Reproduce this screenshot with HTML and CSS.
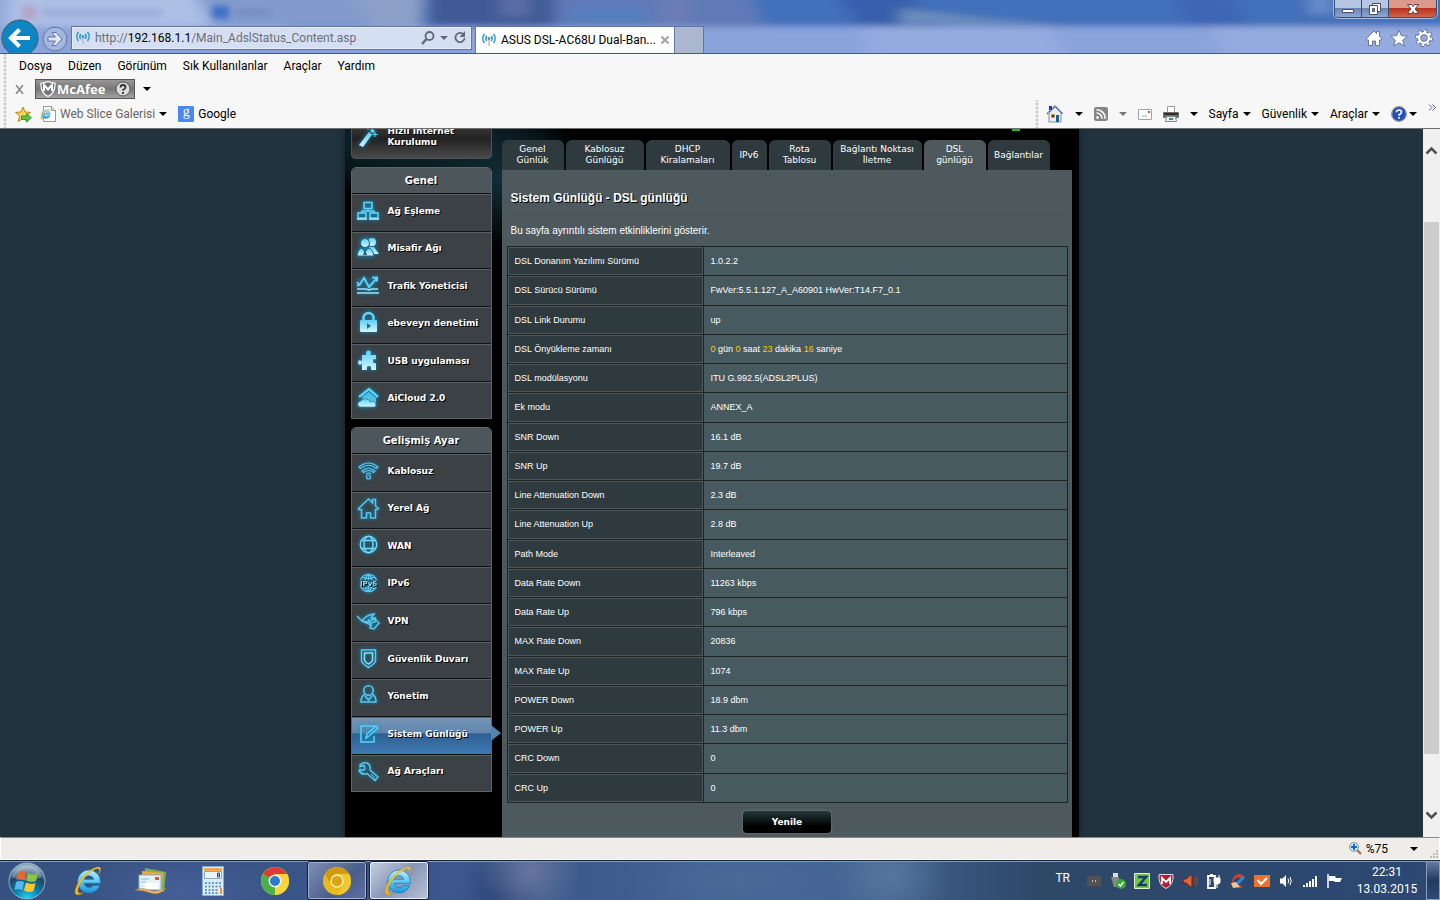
FILE: index.html
```html
<!DOCTYPE html>
<html lang="tr">
<head>
    <meta charset="utf-8">
    <title>ASUS DSL-AC68U Dual-Band</title>
    <link rel="stylesheet" href="styles.css">
</head>
<body>
    <svg class="defs" aria-hidden="true">
        <defs>
            <linearGradient id="ieBlue" x1="0" y1="0" x2="0" y2="1"><stop offset="0" stop-color="#b9efff"/><stop offset=".5" stop-color="#5cc8f4"/><stop offset="1" stop-color="#1f93d8"/></linearGradient>
            <linearGradient id="ieGold" x1="0" y1="1" x2="1" y2="0"><stop offset="0" stop-color="#f2b90f"/><stop offset="1" stop-color="#ffe458"/></linearGradient>
            <radialGradient id="orb" cx=".5" cy="1" r=".9"><stop offset="0" stop-color="#1fd5fb"/><stop offset=".4" stop-color="#0b7fb0"/><stop offset=".75" stop-color="#1d4468"/><stop offset="1" stop-color="#8ea9bd"/></radialGradient>
            <linearGradient id="glow" x1="0" y1="0" x2="0" y2="1"><stop offset="0" stop-color="#5fd0f5"/><stop offset="1" stop-color="#d4f5ff"/></linearGradient>
            <symbol id="ie" viewBox="0 0 32 32">
                <path d="M16 5a11.500 11.500 0 1 0 10.800 15.500h-6.600a5 5 0 0 1-9-2.200h16.200v-1.600A11.500 11.500 0 0 0 16 5zm-4.800 9.300a5 5 0 0 1 9.600 0z" fill="url(#ieBlue)" stroke="#1779b5" stroke-width=".7"/>
                <path d="M25.500 9.500c3.500-5.500 2.500-8.500-2.500-7C14 5.200 4 16.500 2.200 25.500c-1 5.200 3.300 5.500 8.300 2C6 29.500 4 28 5.200 23.500 7.200 16 15.500 7 22.500 4c4-1.600 5 .7 3 5.500z" fill="url(#ieGold)" stroke="#c98d05" stroke-width=".5"/>
            </symbol>
            <symbol id="antenna" viewBox="0 0 16 16">
                <g fill="none" stroke="#2f9cc5" stroke-width="1.600"><path d="M3.500 2a7 7 0 0 0 0 9M12.500 2a7 7 0 0 1 0 9M5.800 4a4 4 0 0 0 0 5M10.200 4a4 4 0 0 1 0 5"/></g>
                <circle cx="8" cy="6.500" r="1.500" fill="#2f9cc5"/><path d="M8 8v6" stroke="#bbb" stroke-width="1.500"/>
            </symbol>
        </defs>
    </svg>

    <header class="frame">
        <svg class="glass" viewBox="0 0 1440 54" preserveAspectRatio="none" aria-hidden="true">
            <filter id="haze" filterUnits="userSpaceOnUse" x="-40" y="-40" width="1520" height="140"><feGaussianBlur stdDeviation="8 3"/></filter>
            <filter id="soft" filterUnits="userSpaceOnUse" x="-40" y="-40" width="1520" height="140"><feGaussianBlur stdDeviation="3"/></filter>
            <g filter="url(#haze)">
                <path d="M-40-20h1520v100H-40z" fill="#426fba"/>
                <path d="M-40-20h330v100H-40z" fill="#8fa8d8"/>
                <path d="M10-10h180l22 40H5z" fill="#aebfe6"/>
                <path d="M200-10h175l25 36H217z" fill="#829bcc"/>
                <path d="M350-15h75l-5 44H375z" fill="#8da1c8"/>
                <path d="M425-15h130v42H430z" fill="#415a97"/>
                <path d="M500-15h30v32h-30z" fill="#5b6ca6"/>
                <path d="M555-15h190l20 42H555z" fill="#5f7ab7"/>
                <path d="M575 10h70v10h-70z" fill="#5580c0"/>
                <path d="M660-10h30v36h-30z" fill="#6d7bb4"/>
                <path d="M830-15h70l40 42h-80z" fill="#385fac"/>
                <path d="M900 8l70 9 90 8H900z" fill="#6a8cbc"/>
                <path d="M1170-15h50l30 42h-60z" fill="#3c66b4"/>
                <path d="M1310-5h20v20h-20z" fill="#6c8fcb"/>
                <path d="M-40 27h1520v60H-40z" fill="#8ba3db"/>
                <path d="M860 27h190l30 60H880zM1210 27h260v60h-230z" fill="#95abdf"/>
            </g>
            <g filter="url(#soft)">
                <path d="M22 6h14v14H22z" fill="#b3a5c5"/>
                <path d="M42 10h120v6H42z" fill="#94a8d4"/>
                <path d="M212 6h17v13h-17z" fill="#3c6fc8"/>
                <path d="M235 10h36v6h-36z" fill="#738bbd"/>
            </g>
        </svg>
        <div class="titlebar">
            <div class="window-buttons">
                <button aria-label="Simge durumuna küçült"><svg width="14" height="14" viewBox="0 0 14 14"><path d="M1.500 7.500h11v3h-11z" fill="#fff" stroke="#4a4f63"/></svg></button>
                <button aria-label="Önceki boyut"><svg width="14" height="14" viewBox="0 0 14 14"><path d="M4.500 1.500h8v8h-8z" fill="#fff" stroke="#4a4f63"/><path d="M1.500 3.500h8v9h-8z" fill="#fff" stroke="#4a4f63"/><path d="M4.500 6.500h2v3h-2z" fill="#8ba0c4" stroke="#4a4f63"/></svg></button>
                <button class="close" aria-label="Kapat"><svg width="14" height="14" viewBox="0 0 14 14"><path d="M1.500 2.500h4L7 4.500l1.500-2h4L9.200 7l3.300 4.500h-4L7 9.500l-1.500 2h-4L4.800 7z" fill="#fff" stroke="#5b4450"/></svg></button>
            </div>
        </div>
        <div class="navbar">
            <button class="back" aria-label="Geri"><svg width="38" height="38" viewBox="0 0 38 38"><circle cx="19" cy="19" r="18" fill="#0f86c4" stroke="#456" stroke-width="1"/><path d="M29 19H11M18.500 10.500L10 19l8.500 8.500" fill="none" stroke="#fff" stroke-width="4"/></svg></button>
            <button class="forward" aria-label="İleri"><svg width="26" height="26" viewBox="0 0 26 26"><circle cx="13" cy="13" r="12" fill="#a3b6e0" stroke="#64759f"/><path d="M6 11h7.500L10 6.500h4l6 6.500-6 6.500h-4l3.500-4.500H6z" fill="#dfe6f6" stroke="#64759f"/></svg></button>
            <div class="address">
                <svg width="16" height="16"><use href="#antenna"/></svg>
                <label class="url"><span aria-hidden="true">http://<b>192.168.1.1</b>/Main_AdslStatus_Content.asp</span><input type="text" aria-label="Adres"></label>
                <button aria-label="Ara"><svg width="16" height="16" viewBox="0 0 16 16"><circle cx="9.500" cy="6" r="4" fill="none" stroke="#626875" stroke-width="1.800"/><path d="M6.500 9L2 14" stroke="#626875" stroke-width="2.500"/></svg></button>
                <button aria-label="Adres listesi"><svg width="8" height="8" viewBox="0 0 8 8"><path d="M0 2h8L4 6z" fill="#626875"/></svg></button>
                <button aria-label="Yenile"><svg width="16" height="16" viewBox="0 0 16 16"><path d="M11.500 4.500A4.600 4.600 0 1 0 12.600 8" fill="none" stroke="#626875" stroke-width="1.800"/><path d="M13 1v6H7.500z" fill="#626875"/></svg></button>
            </div>
            <div class="browser-tab">
                <svg width="16" height="16"><use href="#antenna"/></svg>
                <span>ASUS DSL-AC68U Dual-Ban...</span>
                <button aria-label="Sekmeyi kapat"><svg width="10" height="10" viewBox="0 0 10 10"><path d="M1.500 1.500l7 7M8.500 1.500l-7 7" stroke="#a5a5a5" stroke-width="2.200"/></svg></button>
            </div>
            <button class="new-tab" aria-label="Yeni sekme"></button>
            <div class="frame-tools">
                <button aria-label="Giriş"><svg width="18" height="18" viewBox="0 0 18 18"><path d="M1.500 9.500L9 2l2.500 2.500V2.500h3v5l2 2v1.500h-2v5.500h-4v-4.500h-3v4.500h-4V11h-2z" fill="#fff" stroke="#69789a"/></svg></button>
                <button aria-label="Sık Kullanılanlar"><svg width="18" height="18" viewBox="0 0 18 18"><path d="M9 1l2.300 5.700 6.200.4-4.800 4 1.600 6L9 13.800l-5.300 3.300 1.600-6-4.800-4 6.200-.4z" fill="#fff" stroke="#69789a"/></svg></button>
                <button aria-label="Araçlar"><svg width="18" height="18" viewBox="0 0 18 18"><circle cx="9" cy="9" r="6.800" fill="none" stroke="#69789a" stroke-width="4.500" stroke-dasharray="3 2.340"/><circle cx="9" cy="9" r="4.900" fill="none" stroke="#69789a" stroke-width="4.300"/><circle cx="9" cy="9" r="6.800" fill="none" stroke="#fff" stroke-width="2.600" stroke-dasharray="2.200 3.140"/><circle cx="9" cy="9" r="4.900" fill="none" stroke="#fff" stroke-width="2.400"/></svg></button>
            </div>
        </div>
    </header>

    <div class="toolbars">
        <nav class="menubar grip">
            <button>Dosya</button><button>Düzen</button><button>Görünüm</button><button>Sık Kullanılanlar</button><button>Araçlar</button><button>Yardım</button>
        </nav>
        <div class="mcafee-bar grip">
            <button class="bar-close" aria-label="Kapat"><svg width="9" height="9" viewBox="0 0 9 9"><path d="M1 0l7 9M8 0L1 9" stroke="#888" stroke-width="1.600"/></svg></button>
            <button class="mcafee">
                <svg width="16" height="16" viewBox="0 0 16 16"><path d="M1 2q4 0 7-1.500Q11 2 15 2q.5 10-7 13.500Q.5 12 1 2z" fill="#777" stroke="#fff" stroke-width="1.200"/><path d="M4 10V4l4 4.500L12 4v6" fill="none" stroke="#fff" stroke-width="2"/></svg>
                <span>McAfee</span>
                <svg width="16" height="16" viewBox="0 0 16 16"><circle cx="8" cy="8" r="7" fill="#ddd" stroke="#555"/><path d="M5.500 6.500q0-2.500 2.500-2.500t2.500 2.200Q10.500 7.500 8 9v.8M8 11v2" fill="none" stroke="#333" stroke-width="1.800"/></svg>
            </button>
            <button aria-label="McAfee menüsü"><i class="caret"></i></button>
        </div>
        <div class="links-row">
            <div class="favorites grip">
                <button aria-label="Sık kullanılanlara ekle"><svg width="17" height="17" viewBox="0 0 17 17"><path d="M8 1l2 5 5.500.4-4.200 3.500 1.400 5.500L8 12.500l-4.700 2.900 1.400-5.500L.5 6.400 6 6z" fill="#fbd45c" stroke="#ba8317"/><path d="M6.500 10h5V7.500l5 4.300-5 4.200v-2.500h-5z" fill="#5cc73b" stroke="#2c8d1c" stroke-width=".8"/></svg></button>
                <button class="muted"><svg width="16" height="16" viewBox="0 0 16 16"><path d="M3.500.5h8l4 4v11h-12z" fill="#fff" stroke="#999"/><path d="M11.500.5v4h4" fill="#ddd" stroke="#999"/><use href="#ie" x="0" y="2" width="12" height="12"/></svg>Web Slice Galerisi <i class="caret"></i></button>
                <button><span class="google">g</span>Google</button>
            </div>
            <div class="commands grip">
                <button aria-label="Giriş sayfası"><svg width="18" height="18" viewBox="0 0 18 18"><path d="M3 1h3v4H3z" fill="#2737a8"/><path d="M3 8l6-6 6 6v9H3z" fill="#e9eef5" stroke="#85909f"/><path d="M1 9l8-8 8 8" fill="none" stroke="#5263b8" stroke-width="1.400" stroke-dasharray="2 .5"/><path d="M10 10h3v7h-3z" fill="#1c5b9c"/><path d="M5.500 9.500h3v3h-3z" fill="#333" stroke="#c99a45"/></svg></button>
                <i class="caret"></i>
                <button aria-label="Akışlar"><svg width="14" height="14" viewBox="0 0 14 14"><rect width="14" height="14" rx="2" fill="#858585"/><circle cx="3.500" cy="10.500" r="1.500" fill="#fff"/><path d="M2.500 6A5.500 5.500 0 0 1 8 11.800M2.500 2.800a8.500 8.500 0 0 1 8.700 9" fill="none" stroke="#fff" stroke-width="1.600"/></svg></button>
                <i class="caret dim"></i>
                <button aria-label="Posta"><svg width="14" height="11" viewBox="0 0 14 11"><path d="M.5.500h13v10H.5z" fill="#fff" stroke="#a2a2a2"/><path d="M10 2h2v2h-2z" fill="#e34444"/><path d="M4 7h5" stroke="#aaa"/></svg></button>
                <button aria-label="Yazdır"><svg width="16" height="17" viewBox="0 0 16 17"><path d="M4.500.5h7v6h-7z" fill="#fff" stroke="#999"/><rect y="6" width="16" height="6" rx="1" fill="#6c6c6c"/><path d="M1 8h14" stroke="#303030" stroke-width="2"/><path d="M3.500 10.500h9l1 5h-11z" fill="#eee" stroke="#888"/><path d="M6 12h4v2H6z" fill="#278ba5"/></svg></button>
                <i class="caret"></i>
                <button class="text">Sayfa <i class="caret"></i></button>
                <button class="text">Güvenlik <i class="caret"></i></button>
                <button class="text">Araçlar <i class="caret"></i></button>
                <button aria-label="Yardım" class="help"><svg width="16" height="16" viewBox="0 0 16 16"><circle cx="8" cy="8" r="7.300" fill="#2450b5" stroke="#8b8f99" stroke-width="1.300"/><path d="M5.500 6.300Q5.500 4 8 4t2.500 2Q10.500 7.500 8 9v.8M8 11v1.800" fill="none" stroke="#fff" stroke-width="1.700"/></svg><i class="caret"></i></button>
                <button class="more" aria-label="Diğer"><svg width="8" height="7" viewBox="0 0 8 7"><path d="M1 .5l3 3-3 3M4.500.5l3 3-3 3" fill="none" stroke="#626296"/></svg></button>
            </div>
        </div>
    </div>

    <div class="viewport">
        <main class="router">
            <span class="led"></span>
            <aside class="sidebar">
                <a class="wizard" href="#">
                    <svg class="icon" width="24" height="24" viewBox="0 0 24 24"><path d="M3 20L13 7l3 2.500L7 22z" fill="url(#glow)"/><path d="M14 6l2-2.500 3 2.300-2 2.500z" fill="#5fd0f5"/><path d="M19 7v5M16.500 9.500h5M12 2v3" stroke="#5fd0f5"/></svg>
                    <span>Hızlı İnternet Kurulumu</span>
                </a>
                <nav class="menu">
                    <h2>Genel</h2>
                    <div class="items">
                        <a href="#"><svg class="icon" width="24" height="24" viewBox="0 0 24 24"><g fill="#1d6d8e" stroke="#64d2f6" stroke-width="1.600"><path d="M8 3.500h8v6H8zM2 14h8v5H2zM14 14h8v5h-8z"/><path d="M12 10v2M6 14v-2h12v2" fill="none"/></g><path d="M1 20h10M13 20h10" stroke="#b9efff" stroke-width="1.500"/></svg>Ağ Eşleme</a>
                        <a href="#"><svg class="icon" width="24" height="24" viewBox="0 0 24 24"><g fill="url(#glow)"><circle cx="16" cy="6" r="4"/><path d="M13 11h5l5 7h-8z"/><circle cx="9" cy="7" r="4.500" stroke="#22617d"/><path d="M1 20q1-7 5-8l3 4 3-4q5 1 6 8z" stroke="#22617d"/></g><path d="M9 14l-2 5h4z" fill="#225d79"/></svg>Misafir Ağı</a>
                        <a href="#"><svg class="icon" width="24" height="24" viewBox="0 0 24 24"><path d="M1 5h20M1 10h20" stroke="#287b9c" stroke-dasharray="2 2"/><path d="M1 12l3-2 4-6 5 9 8-9M16 3.500h5v4M1 8l3 4" fill="none" stroke="#5fd0f5" stroke-width="2"/><path d="M1 15h9l3 1 3-1h6M1 19h22" fill="none" stroke="#9be4fb" stroke-width="1.600"/></svg>Trafik Yöneticisi</a>
                        <a href="#"><svg class="icon" width="24" height="24" viewBox="0 0 24 24"><path d="M7.500 11V7a5 5 0 0 1 10 0v4" fill="none" stroke="#67d3f6" stroke-width="2.400"/><rect x="4" y="9" width="17" height="12" rx="1" fill="url(#glow)"/><path d="M11 12l4 3-4 3z" fill="#2b6b86"/></svg>ebeveyn denetimi</a>
                        <a href="#"><svg class="icon" width="24" height="24" viewBox="0 0 24 24"><path d="M6 6h4.500q-1.500-4.500 2-4.500t2 4.500H20v4.500q-3-1.500-3 1.500t3 2v7h-5q1-4-2-4t-2 4H6v-6q-4 2-4-1.500T6 12z" fill="url(#glow)"/></svg>USB uygulaması</a>
                        <a href="#"><svg class="icon" width="24" height="24" viewBox="0 0 24 24"><path d="M3 11l10-8 9 8" fill="none" stroke="#5fd0f5" stroke-width="2.400"/><path d="M6 11l7-5 7 6v5H9z" fill="#4ebfe5"/><path d="M4 21q-3-1-2-4 1-2 3-2 1-3 5-2 3 0 4 3 5-2 6 3 0 2-2 2z" fill="url(#glow)" stroke="#2680a3" stroke-width=".7"/></svg>AiCloud 2.0</a>
                    </div>
                </nav>
                <nav class="menu">
                    <h2>Gelişmiş Ayar</h2>
                    <div class="items items-long">
                        <a href="#"><svg class="icon" width="24" height="24" viewBox="0 0 24 24"><g fill="none" stroke="#58c8ee" stroke-width="1.200"><path d="M3 8q9.500-8 19 0l-1.500 1.500q-8-6.500-16 0zM6 12q6.500-5.500 13 0l-1.500 1.500q-5-4-10 0zM10 15q2.500-2 5 0"/><circle cx="12.500" cy="18" r="2"/></g></svg>Kablosuz</a>
                        <a href="#"><svg class="icon" width="24" height="24" viewBox="0 0 24 24"><path d="M2.500 12.500L12.500 3l4 4V3.500h3V10l3 2.500-1 1h-2V22h-5v-5h-4v5h-5v-8.500h-3z" fill="none" stroke="#58c8ee" stroke-width="1.500"/></svg>Yerel Ağ</a>
                        <a href="#"><svg class="icon" width="24" height="24" viewBox="0 0 24 24"><g fill="none" stroke="#73d8f6" stroke-width="1.400"><circle cx="12.500" cy="10.500" r="8.300"/><ellipse cx="12.500" cy="10.500" rx="4.500" ry="8.300"/><path d="M5 6.500h15M5 14.500h15"/></g></svg>WAN</a>
                        <a href="#"><svg class="icon" width="24" height="24" viewBox="0 0 24 24"><g fill="none" stroke="#58c8ee" stroke-width="1.200"><path d="M4.500 9a8.500 8.500 0 0 1 16 0M4.500 15a8.500 8.500 0 0 0 16 0M6 6q6.500 3 13 0M6 18q6.500-3 13 0M12.500 3.500V9M12.500 15v5.500M9 9q.5-4 3.500-5.500Q15.500 5 16 9M9 15q.5 4 3.500 5.500 3-1.500 3.500-5.500"/></g><text x="12.500" y="15" text-anchor="middle" class="ipv6-label">IPv6</text></svg>IPv6</a>
                        <a href="#"><svg class="icon" width="24" height="24" viewBox="0 0 24 24"><g fill="none" stroke="#58c8ee" stroke-width="1.500"><path d="M1 7l5 5q4-6 12-7l-3 4h5l-8 4-6-1M6 12l9 4-3-6M15 16l-1 3 4 1 5-6-4-4v3l-5 1"/></g></svg>VPN</a>
                        <a href="#"><svg class="icon" width="24" height="24" viewBox="0 0 24 24"><path d="M5.500 3h14v11q-1 3-7 6.500Q6.500 17 5.500 14z" fill="none" stroke="#58c8ee" stroke-width="1.500"/><path d="M8.500 6h8v7.500q-1 2-4 3.500-3-1.500-4-3.500z" fill="none" stroke="#8ae0fa" stroke-width="1.500"/></svg>Güvenlik Duvarı</a>
                        <a href="#"><svg class="icon" width="24" height="24" viewBox="0 0 24 24"><g fill="none" stroke="#58c8ee" stroke-width="1.600"><circle cx="12.500" cy="6.500" r="4.700"/><path d="M9 10q-4 2-4 8h15q0-6-4-8M9 12l3.500 4 3.500-4"/></g></svg>Yönetim</a>
                        <a href="#" class="selected"><svg class="icon" width="24" height="24" viewBox="0 0 24 24"><g fill="none" stroke="#58d2fa" stroke-width="1.500"><path d="M18 14v6H5V4h13v2M10 16l1-4 9-8 2 2-9 8zM10 16l3-2"/></g></svg>Sistem Günlüğü</a>
                        <a href="#"><svg class="icon" width="24" height="24" viewBox="0 0 24 24"><path d="M4 6q3-3 7-2 4 2 3 7l8 7-3 3.500-8-7q-5 2-8-3l1-1q4 2 5-1l-1-3-4 1z" fill="none" stroke="#58c8ee" stroke-width="1.500"/><path d="M15 15l4 4" stroke="#58c8ee"/></svg>Ağ Araçları</a>
                    </div>
                </nav>
            </aside>

            <section class="content">
                <nav class="tabs">
                    <a href="#">Genel<br>Günlük</a>
                    <a href="#" class="tab-md">Kablosuz<br>Günlüğü</a>
                    <a href="#" class="tab-lg">DHCP<br>Kiralamaları</a>
                    <a href="#" class="tab-xs">IPv6</a>
                    <a href="#">Rota<br>Tablosu</a>
                    <a href="#" class="tab-xl">Bağlantı Noktası<br>İletme</a>
                    <a href="#" class="active">DSL<br>günlüğü</a>
                    <a href="#">Bağlantılar</a>
                </nav>
                <div class="panel">
                    <h1>Sistem Günlüğü - DSL günlüğü</h1>
                    <p>Bu sayfa ayrıntılı sistem etkinliklerini gösterir.</p>
                    <table>
                        <tr><th scope="row">DSL Donanım Yazılımı Sürümü</th><td>1.0.2.2</td></tr>
                        <tr><th scope="row">DSL Sürücü Sürümü</th><td>FwVer:5.5.1.127_A_A60901 HwVer:T14.F7_0.1</td></tr>
                        <tr><th scope="row">DSL Link Durumu</th><td>up</td></tr>
                        <tr><th scope="row">DSL Önyükleme zamanı</th><td><em>0</em> gün <em>0</em> saat <em>23</em> dakika <em>16</em> saniye</td></tr>
                        <tr><th scope="row">DSL modülasyonu</th><td>ITU G.992.5(ADSL2PLUS)</td></tr>
                        <tr><th scope="row">Ek modu</th><td>ANNEX_A</td></tr>
                        <tr><th scope="row">SNR Down</th><td>16.1 dB</td></tr>
                        <tr><th scope="row">SNR Up</th><td>19.7 dB</td></tr>
                        <tr><th scope="row">Line Attenuation Down</th><td>2.3 dB</td></tr>
                        <tr><th scope="row">Line Attenuation Up</th><td>2.8 dB</td></tr>
                        <tr><th scope="row">Path Mode</th><td>Interleaved</td></tr>
                        <tr><th scope="row">Data Rate Down</th><td>11263 kbps</td></tr>
                        <tr><th scope="row">Data Rate Up</th><td>796 kbps</td></tr>
                        <tr><th scope="row">MAX Rate Down</th><td>20836</td></tr>
                        <tr><th scope="row">MAX Rate Up</th><td>1074</td></tr>
                        <tr><th scope="row">POWER Down</th><td>18.9 dbm</td></tr>
                        <tr><th scope="row">POWER Up</th><td>11.3 dbm</td></tr>
                        <tr><th scope="row">CRC Down</th><td>0</td></tr>
                        <tr><th scope="row">CRC Up</th><td>0</td></tr>
                    </table>
                    <button class="refresh">Yenile</button>
                </div>
            </section>
        </main>
        <div class="scrollbar">
            <svg width="13" height="9" viewBox="0 0 13 9"><path d="M1.500 7.500l5-5 5 5" fill="none" stroke="#505050" stroke-width="2.500"/></svg>
            <div class="track"><div class="thumb"></div></div>
            <svg width="13" height="9" viewBox="0 0 13 9"><path d="M1.500 1.500l5 5 5-5" fill="none" stroke="#505050" stroke-width="2.500"/></svg>
        </div>
    </div>

    <div class="statusbar">
        <button><svg width="13" height="13" viewBox="0 0 13 13"><path d="M8 8l4 4" stroke="#a6764a" stroke-width="2.400"/><circle cx="5" cy="5" r="4.400" fill="#d5ebfc" stroke="#6d93bd"/><path d="M5 2v6M2 5h6" stroke="#1466c4" stroke-width="2"/></svg>%75 <i class="caret"></i></button>
        <svg class="resize" width="9" height="9" viewBox="0 0 9 9"><path d="M6 0h2v2H6zM3 3h2v2H3zM6 3h2v2H6zM0 6h2v2H0zM3 6h2v2H3zM6 6h2v2H6z" fill="#bbb"/></svg>
    </div>

    <footer class="taskbar">
        <button class="start" aria-label="Başlat"><svg width="38" height="38" viewBox="0 0 38 38"><circle cx="19" cy="19" r="18" fill="url(#orb)" stroke="#8fb2ca"/><path d="M4 15a15.500 15.500 0 0 1 30 0q-15 7-30 0z" fill="#fff" opacity=".25"/><path d="M10 11q4-3 8-1l-1.500 8q-4-2-8 0z" fill="#f0652c"/><path d="M20 11q5 3 10 0l-2 8q-5 2-9.500-.5z" fill="#8cc63f"/><path d="M8 20q4-2 8 0l-1.500 8q-4-2-8 0z" fill="#55b7ec"/><path d="M18 20.500q5 2.500 9.500.5l-2 8q-5 2-9.500-.5z" fill="#ffc726"/></svg></button>
        <button class="task" aria-label="Internet Explorer"><svg width="32" height="32"><use href="#ie"/></svg></button>
        <button class="task" aria-label="Windows Live Mail"><svg width="32" height="32" viewBox="0 0 32 32"><path d="M10 3l21 4-2 20-20-4z" fill="#72b45c"/><path d="M7 6l21 2-1 17-20-3z" fill="#f2a63c"/><path d="M4 10h22v15H4z" fill="#e5f2fc" stroke="#78b0dc"/><path d="M20 12h4v3h-4z" fill="#e05a1e"/><path d="M6 14h8M6 17h5" stroke="#8ab5d8"/><path d="M10 18h13v6H10z" fill="#fff"/><path d="M0 25q7-3 14 0t17-2q-7 8-15 5T0 25z" fill="#f3b765" stroke="#b9762d" stroke-width=".5"/></svg></button>
        <button class="task" aria-label="Hesap Makinesi"><svg width="32" height="32" viewBox="0 0 32 32"><path d="M5.500 1.500h21v29h-21z" fill="#d9ecf9" stroke="#7fb0d8"/><path d="M7 3h18v3H7z" fill="#f4a640"/><path d="M7.500 6.500h17v7h-17z" fill="#eaf4fb" stroke="#8da9bd"/><path d="M20.500 8h2v4h-2zM20.500 10h2" fill="none" stroke="#445"/><g stroke="#6a9abf" stroke-width="2" stroke-dasharray="2 1.500"><path d="M8 18h17M8 21.500h17M8 25h13M8 28h13"/></g><path d="M23 23h2v6h-2z" fill="#f1962c"/></svg></button>
        <button class="task" aria-label="Chrome"><svg width="32" height="32" viewBox="0 0 32 32"><circle cx="16" cy="16" r="14" fill="#fcd43b"/><path d="M16 16L3.900 9A14 14 0 0 1 28.100 9z" fill="#df3b2f"/><path d="M16 16l0 14A14 14 0 0 1 3.900 9z" fill="#4caf4a"/><path d="M16 9h12.100A14 14 0 0 1 16 30l6-10z" fill="#fcd43b"/><circle cx="16" cy="16" r="6.500" fill="#f5f5f5"/><circle cx="16" cy="16" r="5" fill="#2e7cc9"/></svg></button>
        <button class="task running" aria-label="Chrome Canary"><svg width="32" height="32" viewBox="0 0 32 32"><circle cx="16" cy="16" r="14" fill="#e9b91d"/><path d="M16 9H28A14 14 0 0 0 3.900 9l6 10z" fill="#cf9b0c"/><path d="M16 9h12.100A14 14 0 0 1 16 30l6-10z" fill="#f2c830"/><circle cx="16" cy="16" r="6" fill="#dda50d" stroke="#fff0bd" stroke-width="1.400"/></svg></button>
        <button class="task running current" aria-label="Internet Explorer penceresi"><svg width="32" height="32"><use href="#ie"/></svg></button>
        <div class="tray">
            <button class="lang">TR</button>
            <svg width="16" height="16" viewBox="0 0 16 16"><path d="M1 3h14v10H1z" fill="#525252"/><path d="M6 7h1v2H6zM9 7h1v2H9z" fill="#bbb"/></svg>
            <svg width="16" height="16" viewBox="0 0 16 16"><path d="M3 0h5v4H3z" fill="#ddd"/><path d="M1 4h8v7l-2 3H4z" fill="#888"/><circle cx="11" cy="11" r="5" fill="#32ab30"/><path d="M8.500 11l2 2 3-4" fill="none" stroke="#fff" stroke-width="1.500"/></svg>
            <svg width="16" height="16" viewBox="0 0 16 16"><path d="M.5.500h15v15H.5z" fill="#71c83f" stroke="#dff0d5"/><path d="M4 4h8l-7 8h8" fill="none" stroke="#193875" stroke-width="2.500"/></svg>
            <svg width="16" height="16" viewBox="0 0 16 16"><path d="M1 1.500h14Q16 12 8 15.500 0 12 1 1.500z" fill="#b51f36" stroke="#ddd"/><path d="M4 11V5l4 4 4-4v6" fill="none" stroke="#fff" stroke-width="1.800"/></svg>
            <svg width="16" height="16" viewBox="0 0 16 16"><path d="M1 6h3l6-5v14l-6-5H1z" fill="#e8623a" stroke="#5d2518"/><path d="M12 5q2 3 0 6M14 3q3 5 0 10" fill="none" stroke="#95513f"/></svg>
            <svg width="16" height="16" viewBox="0 0 16 16"><path d="M2 3h7v12H2z" fill="none" stroke="#fff" stroke-width="1.800"/><path d="M4 1h3v2H4z" fill="#fff"/><path d="M8 5h6v4q0 2-3 2T8 9zM9 2v3M13 2v3M11 11v4" fill="#fff" stroke="#fff"/><path d="M4 6v6" stroke="#fff"/></svg>
            <svg width="16" height="16" viewBox="0 0 16 16"><path d="M14 3A7 7 0 1 0 13 14l-3-2a4 4 0 1 1 1-6z" fill="#d3402c"/><path d="M14 4L7 11" stroke="#2d87cf" stroke-width="3"/><path d="M1 10l5-1 4 5-7 1z" fill="#f0c38c"/></svg>
            <svg width="16" height="16" viewBox="0 0 16 16"><path d="M0 2h16v12H0z" fill="#ef7127"/><path d="M3.500 7l3.500 4 6-6" fill="none" stroke="#fff" stroke-width="2"/></svg>
            <svg width="16" height="16" viewBox="0 0 16 16"><path d="M2 5.500h2.500L8 2v12l-3.500-3.500H2z" fill="#fff"/><path d="M10 5.500q1.500 2.500 0 5M12 4q2.500 4 0 8" fill="none" stroke="#fff"/></svg>
            <svg width="16" height="16" viewBox="0 0 16 16"><path d="M1 12h2v2H1zM4 10h2v4H4zM7 8h2v6H7zM10 6h2v8h-2zM13 3h2v11h-2z" fill="#fff"/></svg>
            <svg width="16" height="16" viewBox="0 0 16 16"><path d="M2 1v14" stroke="#fff" stroke-width="1.500"/><path d="M3 3h6l1 2h6l-2 4h-5L8 8H3z" fill="#fff"/></svg>
            <div class="clock"><span>22:31</span><span>13.03.2015</span></div>
        </div>
        <button class="show-desktop" aria-label="Masaüstünü göster"></button>
    </footer>
</body>
</html>
```
FILE: styles.css
```css
* {
    box-sizing: border-box;
}

body {
    margin: 0;
    height: 100vh;
    display: flex;
    flex-direction: column;
    overflow: hidden;
    font-family: Roboto, "Open Sans", sans-serif;
    font-size: 12px;
    color: #000;
}

button {
    display: flex;
    align-items: center;
    margin: 0;
    padding: 0;
    border: 0;
    background: none;
    color: inherit;
    font: inherit;
    white-space: nowrap;
}

a {
    color: inherit;
    text-decoration: none;
}

svg {
    flex: none;
}

.defs {
    position: absolute;
    width: 0;
    height: 0;
}

.caret {
    display: inline-block;
    border: 4px solid transparent;
    border-top-color: #000;
    border-bottom: 0;
}

.caret.dim {
    border-top-color: #777;
}

/* window frame */
.frame {
    position: relative;
    height: 54px;
    background: #8ba3db;
    border-bottom: 1px solid #46578a;
    overflow: hidden;
    flex: none;
}

.glass {
    position: absolute;
    width: 100%;
    height: 100%;
}

.titlebar {
    position: relative;
    height: 26px;
    display: flex;
    justify-content: flex-end;
    padding-right: 3px;
}

.window-buttons {
    display: flex;
    height: 18px;
    border: 1px solid #3c4a6b;
    border-top: 0;
    border-radius: 0 0 5px 5px;
    overflow: hidden;
    box-shadow: 0 0 0 1px #a9bce0;
}

.window-buttons button {
    width: 27px;
    justify-content: center;
    background: linear-gradient(#b7c6e3 45%, #6a84b5 50%, #8fa7d2);
    border-right: 1px solid #3c4a6b;
}

.window-buttons .close {
    width: 47px;
    border: 0;
    background: linear-gradient(#dc9a8c 45%, #b8321c 50%, #d2654c);
}

.navbar {
    position: relative;
    display: flex;
    height: 27px;
}

.back {
    width: 38px;
    height: 38px;
    margin: -7px 3px 0 1px;
}

.forward {
    width: 26px;
    height: 26px;
    margin-right: 3px;
}

.address {
    display: flex;
    align-items: center;
    gap: 4px;
    width: 401px;
    height: 24px;
    padding: 0 3px;
    background: #d5dff3;
    border: 1px solid #64759f;
    box-shadow: inset 0 0 0 1px #e6ecf8;
}

.url {
    position: relative;
    flex: 1;
    color: #6d7078;
    white-space: nowrap;
}

.url b {
    color: #000;
    font-weight: normal;
}

.url input {
    position: absolute;
    left: 0;
    top: 0;
    width: 100%;
    height: 100%;
    padding: 0;
    border: 0;
    background: transparent;
    font: inherit;
}

.browser-tab {
    display: flex;
    align-items: center;
    width: 200px;
    margin-left: 3px;
    padding: 0 5px;
    gap: 4px;
    background: #fff;
    border: 1px solid #5f75a8;
    border-bottom: 0;
    white-space: nowrap;
}

.browser-tab button {
    margin-left: auto;
}

.new-tab {
    width: 29px;
    background: #acb8cf;
    border: 1px solid #64759f;
    border-width: 1px 1px 0 0;
}

.frame-tools {
    display: flex;
    gap: 7px;
    margin-left: auto;
    padding: 0 7px 3px 0;
}

/* toolbars */
.toolbars {
    flex: none;
    height: 75px;
    background: #f7f7f7;
    border-bottom: 1px solid #6d6d6d;
}

.grip {
    display: flex;
    align-items: center;
    background: radial-gradient(circle, #ccc 1px, transparent 2px) 3px 2px / 4px 4px repeat-y;
}

.menubar {
    height: 24px;
    padding-left: 19px;
    gap: 16px;
}

.mcafee-bar {
    height: 22px;
    padding-left: 15px;
    gap: 8px;
}

.bar-close {
    margin-right: 3px;
}

.mcafee {
    width: 100px;
    height: 20px;
    padding: 0 3px 0 4px;
    gap: 1px;
    border: 1px solid #555;
    background: linear-gradient(#979797, #777 50%, #a3a3a3);
    color: #fff;
    font: bold 13px "Open Sans", sans-serif;
}

.mcafee span {
    flex: 1;
    text-align: left;
}

.links-row {
    display: flex;
    justify-content: space-between;
    height: 28px;
}

.favorites {
    padding-left: 15px;
    gap: 8px;
}

.favorites button {
    gap: 4px;
}

.favorites .muted {
    color: #666;
    margin-right: 3px;
}

.google {
    width: 16px;
    height: 16px;
    background: #4a87f0;
    border-radius: 1px;
    color: #fff;
    font: 14px/12px "Liberation Serif", serif;
    text-align: center;
}

.commands {
    padding: 0 4px 0 14px;
    gap: 11px;
}

.commands .text,
.commands .help {
    gap: 4px;
}

.commands .help {
    gap: 2px;
}

.more {
    align-self: flex-start;
    padding-top: 4px;
}

/* router page */
.viewport {
    flex: 1;
    min-height: 0;
    display: flex;
    background: #21333e;
    overflow: hidden;
}

.router {
    position: relative;
    display: flex;
    gap: 10px;
    width: 734px;
    margin: 0 auto;
    padding: 0 7px 0 6px;
    background:
        radial-gradient(ellipse 90px 70px at 160px 50px, #12303a, transparent),
        radial-gradient(ellipse 160px 60px at 60px 10px, #12303a, transparent),
        #000;
    box-shadow: 0 0 6px #101a20;
    color: #fff;
    font-family: "DejaVu Sans", sans-serif;
    font-size: 9px;
}

/* bottom edge of the signal light in the page header */
.led {
    position: absolute;
    top: 0;
    right: 59px;
    width: 8px;
    height: 2px;
    background: #13c013;
}

.sidebar {
    width: 141px;
    font-weight: bold;
    text-shadow: 1px 1px 0 #000;
}

.wizard {
    display: flex;
    align-items: center;
    height: 50px;
    margin-top: -20px;
    padding: 5px 10px 0 4px;
    gap: 8px;
    border: 1px solid #4b5357;
    border-radius: 0 0 4px 4px;
    background: linear-gradient(#555, #222 60%, #4a4a4a);
    line-height: 11px;
}

.icon {
    filter: drop-shadow(0 0 2px #0d8fc4);
}

.ipv6-label {
    font: bold 7px "DejaVu Sans", sans-serif;
    fill: #8ae0fa;
}

.menu {
    margin-top: 8px;
    border: 1px solid #5c6568;
    border-radius: 5px 5px 0 0;
}

.menu h2 {
    margin: 0;
    font-size: 10px;
    line-height: 25px;
    text-align: center;
    background: #4d565b;
    border-radius: 4px 4px 0 0;
}

.items {
    display: flex;
    flex-direction: column;
    height: 225px;
}

.items-long {
    height: 338px;
}

.items a {
    position: relative;
    flex: 1;
    display: flex;
    align-items: center;
    gap: 8px;
    padding: 0 4px 3px;
    background: #3b4144;
    border-top: 1px solid #0e1011;
    box-shadow: inset 0 1px 0 #5a6164;
}

.items .selected {
    background: linear-gradient(#7595b6, #6187ae 42%, #2f6093 46%, #3e79b2);
}

.items .selected::after {
    content: "";
    position: absolute;
    left: 100%;
    top: 8px;
    border: 8px solid transparent;
    border-left: 10px solid #5682ae;
    border-right: 0;
}

.content {
    flex: 1;
    padding-top: 11px;
    display: flex;
    flex-direction: column;
}

.tabs {
    display: flex;
    gap: 2px;
    height: 30px;
}

.tabs a {
    display: flex;
    align-items: center;
    justify-content: center;
    width: 62px;
    background: #2f3a3e;
    border-radius: 6px 6px 0 0;
    line-height: 11px;
    text-align: center;
    white-space: nowrap;
}

.tabs .tab-xs {
    width: 35px;
}

.tabs .tab-md {
    width: 78px;
}

.tabs .tab-lg {
    width: 84px;
}

.tabs .tab-xl {
    width: 89px;
}

.tabs .active {
    background: #4d595d;
}

.panel {
    flex: 1;
    padding: 12px 4px 0 5px;
    background: #4d595d;
    font-family: "Liberation Sans", Arial, sans-serif;
}

.panel h1 {
    margin: 0;
    padding: 0 4px;
    border-bottom: 1px solid #465256;
    font-size: 12px;
    line-height: 32px;
    text-shadow: 1px 1px 0 #000;
}

.panel p {
    margin: 10px 4px;
    font-size: 10px;
    line-height: 11px;
}

.panel table {
    width: 100%;
    height: 557px;
    border-collapse: collapse;
}

.panel th,
.panel td {
    padding: 0 7px;
    border: 1px solid #222;
    text-align: left;
    font-weight: normal;
}

.panel th {
    width: 196px;
    background: #2f3a3e;
    box-shadow: inset 0 0 0 1px #4a585c;
}

.panel td {
    background: #475a5f;
}

.panel em {
    color: #fc0;
    font-style: normal;
}

.refresh {
    width: 88px;
    height: 22px;
    margin: 8px auto 0;
    justify-content: center;
    border-radius: 4px;
    background: linear-gradient(#24373b, #000 70%);
    box-shadow: 0 0 2px #8b9699;
    font: bold 9px "DejaVu Sans", sans-serif;
}

.scrollbar {
    width: 17px;
    display: flex;
    flex-direction: column;
    align-items: center;
    padding: 17px 0;
    background: #f0f0f0;
}

.track {
    flex: 1;
    width: 100%;
    padding: 67px 1px 57px;
}

.thumb {
    height: 100%;
    background: #cdcdcd;
}

/* bottom bars */
.statusbar {
    flex: none;
    display: flex;
    justify-content: flex-end;
    align-items: center;
    gap: 12px;
    height: 23px;
    border: 1px solid #fff;
    border-top-color: #888;
    background: #f0ecea;
}

.statusbar button {
    gap: 4px;
}

.statusbar .caret {
    margin-left: 18px;
}

.resize {
    align-self: flex-end;
}

.taskbar {
    flex: none;
    display: flex;
    height: 40px;
    gap: 2px;
    border-top: 1px solid #16233b;
    box-shadow: inset 0 1px 0 #7f9cc4;
    background:
        radial-gradient(ellipse 50px 50px at 530px 10px, #67759f, transparent),
        radial-gradient(ellipse 40px 50px at 500px 35px, #2d4479, transparent),
        radial-gradient(ellipse 120px 50px at 740px 20px, #4a6b98, transparent),
        radial-gradient(ellipse 60px 50px at 890px 15px, #56769f, transparent),
        radial-gradient(ellipse 100px 40px at 180px 30px, #475f98, transparent),
        linear-gradient(90deg, #36517f, #3b568a 30%, #436593 60%, #2e4868 72%, #2c4873);
}

.start {
    width: 57px;
    padding-left: 8px;
}

.task {
    width: 60px;
    justify-content: center;
}

.running {
    border: 1px solid #14203a;
    border-radius: 3px;
    box-shadow: inset 0 0 0 1px #a2b1cc;
    background: linear-gradient(135deg, #8290b4, #495e8e 60%, #5d719e);
}

.current {
    background: linear-gradient(135deg, #c9d1e0, #8795b7 50%, #b9c3d6);
    box-shadow: inset 0 0 0 1px #e8edf6;
}

.tray {
    display: flex;
    align-items: center;
    gap: 8px;
    margin-left: auto;
    color: #fff;
}

.lang {
    margin-right: 8px;
    padding-bottom: 6px;
}

.clock {
    width: 74px;
    display: flex;
    flex-direction: column;
    align-items: center;
    line-height: 17px;
}

.show-desktop {
    width: 14px;
    border: 1px solid #8a9fbd;
    background: linear-gradient(#64799b, #243a5c 50%, #2f4b76);
}
```
